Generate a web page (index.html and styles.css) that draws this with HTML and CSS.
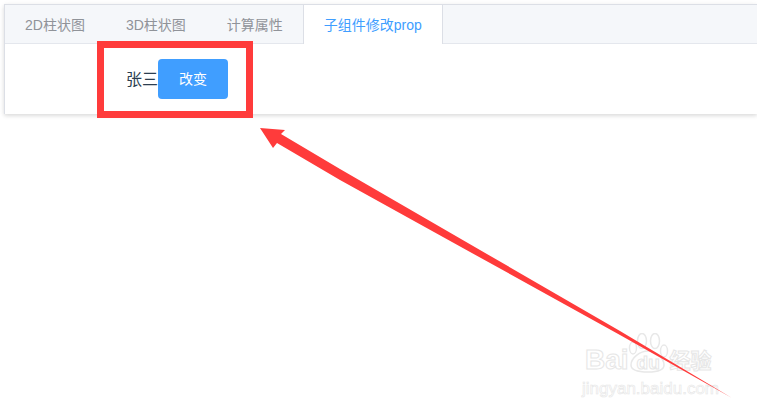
FILE: index.html
```html
<!DOCTYPE html>
<html lang="en">
<head>
  <meta charset="UTF-8" />
  <title>子组件修改prop</title>
  <link rel="stylesheet" href="styles.css">
</head>
<body>
  <div class="card">
    <div class="tabs">
      <div class="tab">2D柱状图</div>
      <div class="tab">3D柱状图</div>
      <div class="tab">计算属性</div>
      <div class="tab tab-active">子组件修改prop</div>
    </div>
    <div class="content">
      <span class="name">张三</span>
      <button class="btn">改变</button>
    </div>
  </div>

  <!-- watermark -->
  <div class="wm">
    <div class="wm-logo">
      <span class="wm-bai">Bai</span>
      <div class="wm-paw">
        <svg width="42" height="40" viewBox="0 0 42 40">
          <g fill="none" stroke="#e8e8e8" stroke-width="1.5">
            <ellipse cx="6" cy="15" rx="3.5" ry="6"/>
            <ellipse cx="15" cy="8" rx="4.5" ry="7.5"/>
            <ellipse cx="28" cy="8" rx="4.5" ry="7.5"/>
            <ellipse cx="37" cy="18" rx="3.5" ry="6"/>
            <path d="M4 32c0-7 9-14 17-14s16 7 16 14c0 6-8 7-16 7S4 38 4 32z"/>
          </g>
        </svg>
        <span class="wm-du">du</span>
      </div>
      <span class="wm-cn">经验</span>
    </div>
    <div class="wm-url">jingyan.baidu.com</div>
  </div>

  <!-- red markup drawn on top of the screenshot -->
  <div class="mark-box"></div>
  <svg class="mark-arrow" width="757" height="414" viewBox="0 0 757 414">
    <polygon fill="#ff3b3b" points="260,128 285,130 281,134 340,169 620,331 732,398 620,335 340,180 277,143 273,148"/>
  </svg>
</body>
</html>
```

FILE: styles.css
```css
body {
  margin: 0;
  height: 414px;
  padding: 4px 0 0 4px;
  box-sizing: border-box;
  background: #fff;
  overflow: hidden;
  font-family: "Liberation Sans", "Noto Sans CJK SC", sans-serif;
}

.card {
  background: #fff;
  border: 1px solid #dcdfe6;
  border-right: none;
  border-bottom: none;
  box-shadow: 0 2px 4px rgba(0,0,0,0.12), 0 0 6px rgba(0,0,0,0.04);
}

.tabs {
  display: flex;
  height: 38px;
  background: #f5f7fa;
  border-bottom: 1px solid #e4e7ed;
}

.tab {
  height: 38px;
  line-height: 40px;
  padding: 0 20px;
  font-size: 14px;
  color: #909399;
  margin-right: 1px;
}

.tab-active {
  height: 39px;
  margin: 0 0 0 -1px;
  color: #409eff;
  background: #fff;
  border-left: 1px solid #dcdfe6;
  border-right: 1px solid #dcdfe6;
}

.content {
  display: flex;
  align-items: center;
  height: 70px;
  padding-left: 121px;
}

.name {
  font-size: 16px;
  color: #2c3e50;
  padding-bottom: 3px;
}

.btn {
  width: 70px;
  height: 40px;
  padding: 0 0 2px;
  border: none;
  border-radius: 4px;
  background: #409eff;
  color: #fff;
  font-family: inherit;
  font-size: 14px;
}

.mark-box {
  position: absolute;
  left: 97px;
  top: 41px;
  width: 142px;
  height: 63px;
  border: 7px solid #ff3b3b;
}

.mark-arrow {
  position: absolute;
  left: 0;
  top: 0;
}

.wm {
  position: absolute;
  left: 582px;
  top: 333px;
  color: #fff;
  -webkit-text-stroke: 1px #e6e6e6;
}

.wm-logo {
  display: flex;
  align-items: flex-end;
  height: 40px;
  padding-left: 3px;
}

.wm-bai {
  font-size: 28px;
  font-weight: bold;
  line-height: 26px;
}

.wm-paw {
  position: relative;
  width: 42px;
  height: 40px;
  margin: 0 1px 0 -2px;
}

.wm-du {
  position: absolute;
  left: 10px;
  top: 20px;
  font-size: 19px;
  line-height: 20px;
  font-weight: bold;
}

.wm-cn {
  font-size: 21px;
  font-weight: bold;
  line-height: 25px;
}

.wm-url {
  font-size: 17px;
  line-height: 18px;
  margin-top: 7px;
  -webkit-text-stroke: 0.6px #e6e6e6;
}
```
